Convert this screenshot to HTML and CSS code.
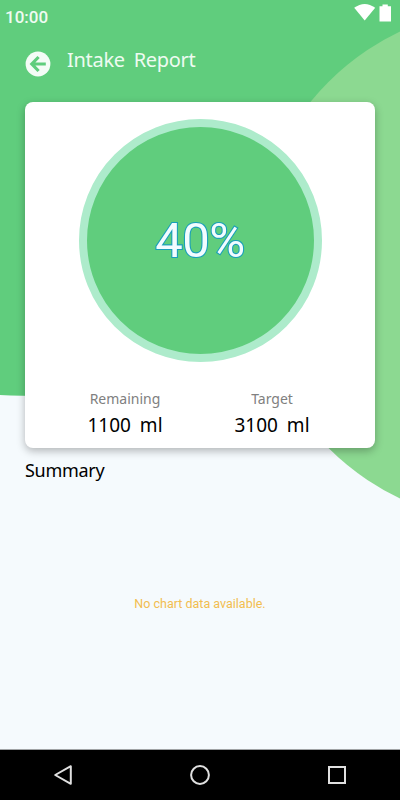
FILE: index.html
```html
<!DOCTYPE html>
<html lang="en">
<head>
    <meta charset="UTF-8">
    <meta name="viewport" content="width=device-width, initial-scale=1.0">
    <title>Intake Report</title>
    <link rel="stylesheet" href="styles.css">
</head>
<body>
    <div class="screen">
        <svg class="backdrop" width="400" height="750" viewBox="0 0 400 750">
            <path d="M0 0H400V396H50Q20 396 0 395Z" fill="#60cd7d"/>
            <circle cx="511" cy="265" r="258.5" fill="#8cd991"/>
        </svg>

        <div class="status-bar">
            <span class="clock">10:00</span>
            <svg class="status-icons" width="40" height="20" viewBox="0 0 40 20">
                <path d="M4.2 4.8Q14.7-2.8 25.2 4.8L14.7 17.5Z" fill="#fff"/>
                <path d="M29.5 3.2H32.5V1.5H37.8V3.2H41V18.5H29.5Z" fill="#fff"/>
            </svg>
        </div>

        <header class="header">
            <svg class="back-icon" width="26" height="26" viewBox="0 0 26 26">
                <circle cx="13" cy="13" r="12.4" fill="#f4fcf6"/>
                <path d="M20.8 13H7.5M13.6 6L6.8 13L13.6 20" fill="none" stroke="#60cd7d" stroke-width="3.2"/>
            </svg>
            <h1 class="title">Intake Report</h1>
        </header>

        <div class="card">
            <div class="progress">
                <span class="percent">40%</span>
            </div>
            <div class="stats">
                <div class="stat">
                    <div class="stat-label">Remaining</div>
                    <div class="stat-value">1100 ml</div>
                </div>
                <div class="stat">
                    <div class="stat-label">Target</div>
                    <div class="stat-value">3100 ml</div>
                </div>
            </div>
        </div>

        <h2 class="summary">Summary</h2>
        <div class="chart">No chart data available.</div>

        <div class="nav-bar">
            <svg width="20" height="22" viewBox="0 0 20 22">
                <path d="M17.8 2.2V19.8L2.2 11Z" fill="none" stroke="#e0e0e0" stroke-width="2" stroke-linejoin="round"/>
            </svg>
            <svg width="20" height="22" viewBox="0 0 20 22">
                <circle cx="10" cy="11" r="8.9" fill="none" stroke="#e0e0e0" stroke-width="2"/>
            </svg>
            <svg width="20" height="22" viewBox="0 0 20 22">
                <rect x="2" y="3" width="16" height="16" fill="none" stroke="#e0e0e0" stroke-width="2"/>
            </svg>
        </div>
    </div>
</body>
</html>
```
FILE: styles.css
```css
body {
    margin: 0;
    font-family: "Noto Sans", sans-serif;
}

.screen {
    position: relative;
    display: flex;
    flex-direction: column;
    width: 400px;
    height: 800px;
    overflow: hidden;
    background-color: #f5fafd;
    z-index: 0;
}

/* green shapes behind the content */
.backdrop {
    position: absolute;
    top: 0;
    left: 0;
    z-index: -1;
}

.status-bar {
    display: flex;
    justify-content: space-between;
    height: 32px;
    padding: 0 10px 0 5px;
}

.clock {
    font: 500 17px/34px Roboto, sans-serif;
    color: #effbf2;
}

.status-icons {
    margin-top: 3px;
    overflow: visible;
}

.header {
    display: flex;
    height: 70px;
    padding-left: 25px;
}

.back-icon {
    margin-top: 19px;
}

.title {
    margin: 12px 0 0 16px;
    font-size: 20px;
    font-weight: 400;
    line-height: 31px;
    letter-spacing: -0.3px;
    word-spacing: 4px;
    color: #eefbf1;
}

.card {
    box-sizing: border-box;
    width: 350px;
    height: 346px;
    margin-left: 25px;
    padding-top: 17px;
    border-radius: 8px;
    background-color: #fff;
    box-shadow: 0 3px 9px rgba(0, 0, 0, 0.28);
}

.progress {
    box-sizing: border-box;
    display: flex;
    align-items: center;
    justify-content: center;
    width: 243px;
    height: 243px;
    margin: 0 auto;
    border: 8px solid #adebcb;
    border-radius: 50%;
    background-color: #60cd7d;
}

.percent {
    font: 400 49px/58px Roboto, sans-serif;
    letter-spacing: -0.5px;
    color: #f2fcff;
    -webkit-text-stroke: 2.2px #189fba;
    paint-order: stroke fill;
}

.stats {
    display: flex;
    justify-content: center;
    margin-top: 27px;
    padding-right: 3px;
}

.stat {
    width: 147px;
    text-align: center;
    white-space: nowrap;
}

.stat-label {
    font-size: 14px;
    line-height: 20px;
    color: #808080;
}

.stat-value {
    font-size: 19px;
    line-height: 32px;
    word-spacing: 4px;
    color: #000;
}

.summary {
    margin: 8px 0 0 25px;
    font-size: 18px;
    font-weight: 400;
    line-height: 28px;
    letter-spacing: -0.3px;
    color: #000;
}

.chart {
    flex: 1;
    padding-top: 112px;
    font: 400 12.5px/16px Roboto, sans-serif;
    text-align: center;
    color: #f2bd4f;
}

.nav-bar {
    box-sizing: border-box;
    display: flex;
    justify-content: space-between;
    align-items: center;
    height: 51px;
    padding: 0 53px;
    border-top: 1px solid #a0a3a5;
    background-color: #000;
}
```
